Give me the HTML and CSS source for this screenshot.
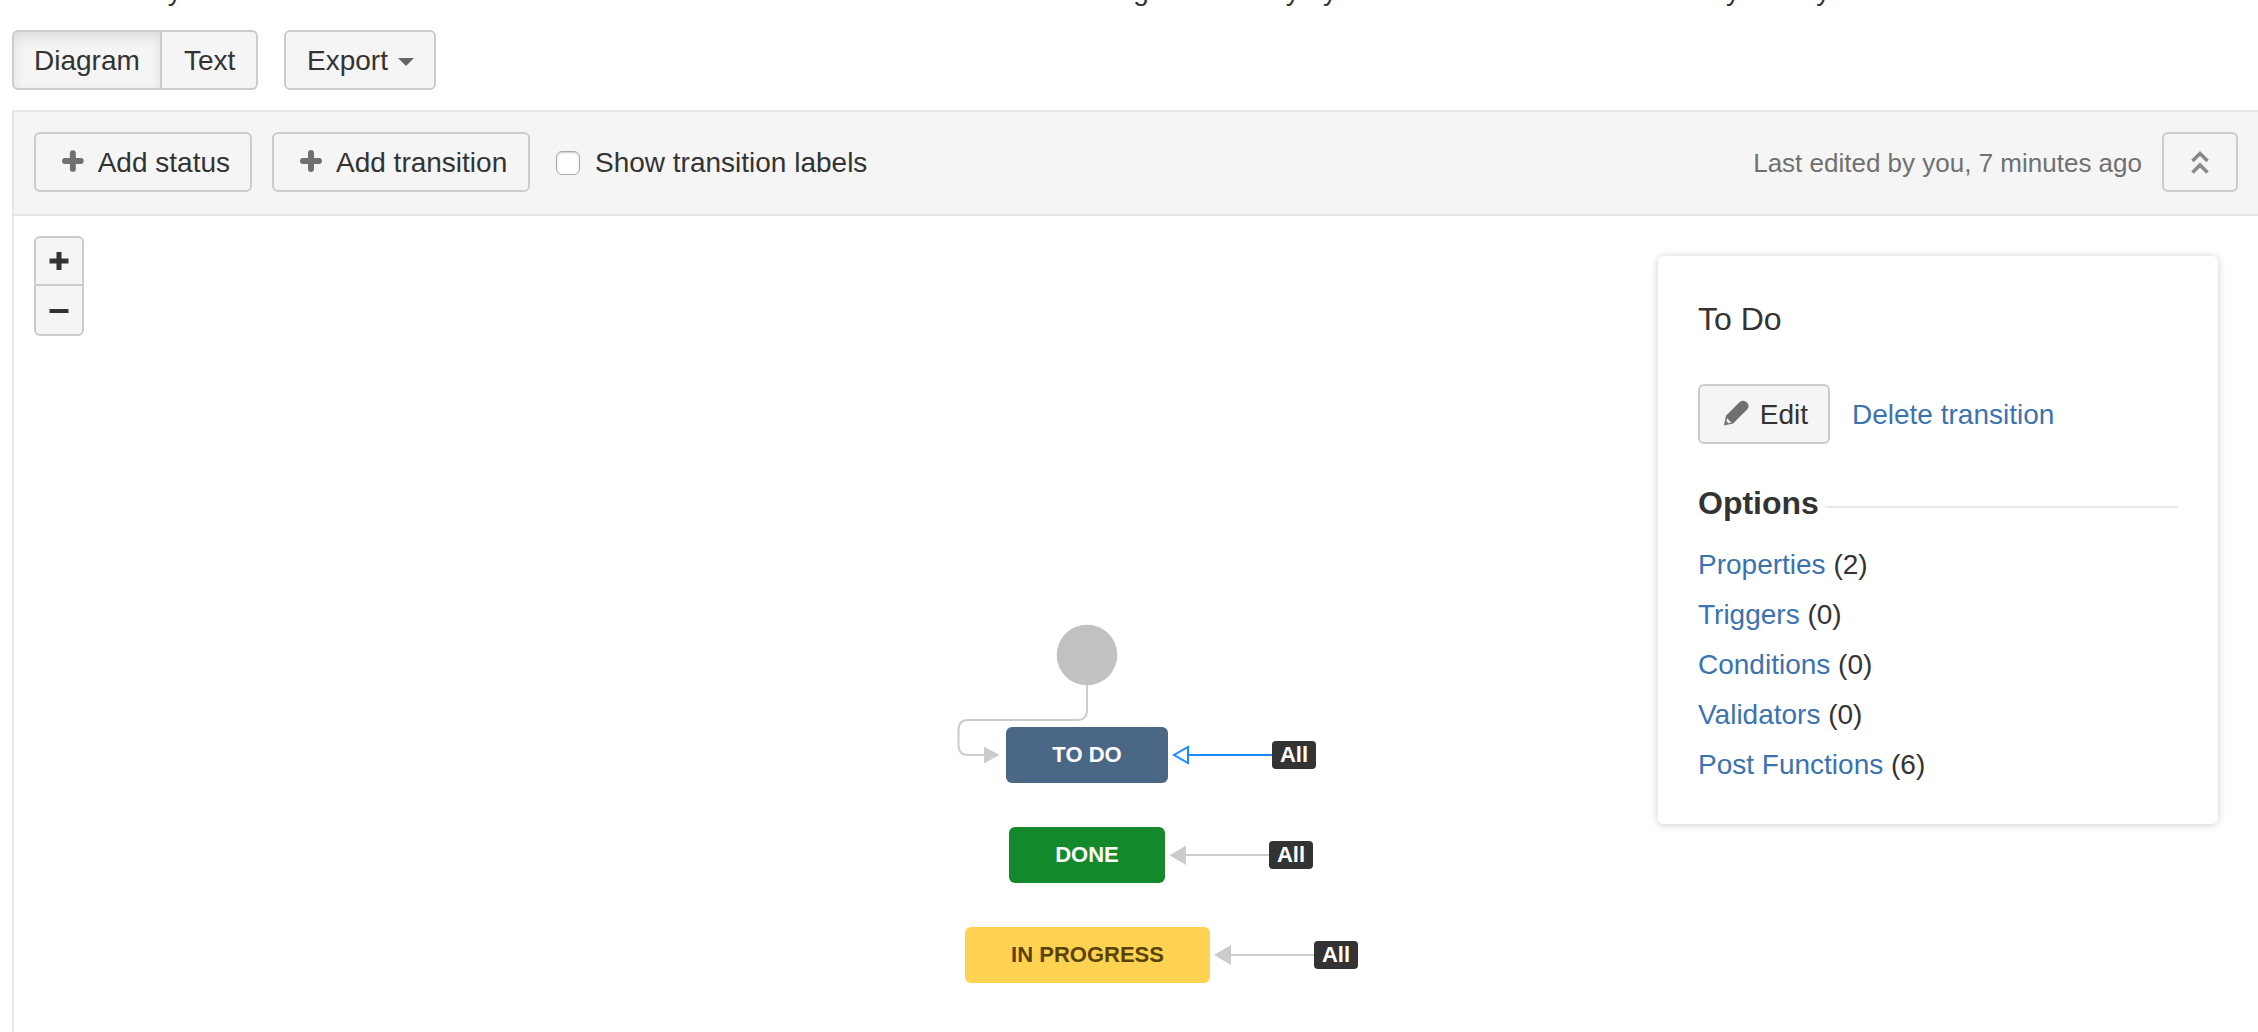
FILE: index.html
```html
<!DOCTYPE html>
<html lang="en">
<head>
<meta charset="utf-8">
<title>Workflow</title>
<link rel="stylesheet" href="styles.css">
</head>
<body>
<p class="description">Generated by JIRA Software version 7.3.0-PLAN-20170818110000. This workflow is managed internally by JIRA Software. Do not manually modify this workflow.</p>
<nav class="modes">
  <div class="group">
    <button class="btn mode active">Diagram</button>
    <button class="btn mode text-mode">Text</button>
  </div>
  <button class="btn export">Export <svg class="caret" viewBox="0 0 16 8"><path d="M0 0h16l-8 8z"/></svg></button>
</nav>
<main class="designer">
  <header class="toolbar">
    <button class="btn add-status"><svg class="plus" viewBox="0 0 22 22"><path d="M11 3v16M3 11h16"/></svg><span>Add status</span></button>
    <button class="btn add-transition"><svg class="plus" viewBox="0 0 22 22"><path d="M11 3v16M3 11h16"/></svg><span>Add transition</span></button>
    <label class="labels"><span class="checkbox"></span>Show transition labels</label>
    <span class="edited">Last edited by you, 7 minutes ago</span>
    <button class="btn collapse" aria-label="Collapse"><svg viewBox="0 0 20 24"><path d="M2.500 11l7.500-7.500 7.500 7.500M2.500 22.500l7.500-7.500 7.500 7.500"/></svg></button>
  </header>
  <section class="canvas">
    <div class="zoom">
      <button class="zoom-btn" aria-label="Zoom in"><svg viewBox="0 0 20 20"><path d="M10 1v18M.5 10h19"/></svg></button>
      <button class="zoom-btn" aria-label="Zoom out"><svg viewBox="0 0 20 20"><path class="minus" d="M.5 10h19"/></svg></button>
    </div>
    <svg class="edges" viewBox="940 600 440 400">
      <circle cx="1087" cy="655" r="30.3" fill="#c1c1c1"/>
      <g fill="none" stroke="#ccc" stroke-width="2">
        <path d="M1087 685v25q0 10-10 10H968.500q-10 0-10 10v15q0 10 10 10H985"/>
        <path d="M1185 855h85M1230 955h85"/>
      </g>
      <path d="M984 746.500v17l15.500-8.500zM1186 845.500v19.500l-16.500-9.800zM1231 945v20l-17-10z" fill="#ccc"/>
      <path d="M1188 755h85M1188 747v16l-14-8z" fill="#fff" stroke="#1a8cff" stroke-width="2"/>
    </svg>
    <div class="status todo">TO DO</div><div class="all all-todo">All</div>
    <div class="status done">DONE</div><div class="all all-done">All</div>
    <div class="status progress">IN PROGRESS</div><div class="all all-progress">All</div>
    <aside class="panel">
      <h2>To Do</h2>
      <div class="actions">
        <button class="btn edit"><svg class="pencil" viewBox="0 0 26 26"><path d="M2 16L16.500 1.500Q20.500-1.500 24 2Q27.500 5.500 24.500 9L9.500 24L0 26z"/><path class="tip" d="M3.200 18.500l4.500 4.500-3 .8-2.200-2.200z"/></svg><span>Edit</span></button>
        <a class="delete">Delete transition</a>
      </div>
      <h3>Options</h3>
      <ul>
        <li><a>Properties</a> (2)</li>
        <li><a>Triggers</a> (0)</li>
        <li><a>Conditions</a> (0)</li>
        <li><a>Validators</a> (0)</li>
        <li><a>Post Functions</a> (6)</li>
      </ul>
    </aside>
  </section>
</main>
</body>
</html>
```

FILE: styles.css
```css
* { box-sizing: border-box; }
body { margin: 0; height: 1032px; overflow: hidden; display: flex; flex-direction: column; background: #fff; color: #333; font: 28px/40px "Liberation Sans", Arial, sans-serif; }
button { font: inherit; color: inherit; }
.description { margin: -29px 0 0 12px; height: 40px; white-space: nowrap; flex: none; }
.modes { display: flex; gap: 26px; margin: 19px 0 20px 12px; flex: none; }
.group { display: flex; }
.btn { height: 60px; border: 2px solid #ccc; border-radius: 6px; background: #f5f5f5; display: flex; align-items: center; padding: 1px 20px 0; white-space: nowrap; flex: none; }
.mode.active { width: 150px; border-radius: 6px 0 0 6px; box-shadow: inset 0 6px 12px #ddd; }
.text-mode { width: 98px; margin-left: -2px; padding-left: 22px; border-radius: 0 6px 6px 0; }
.export { width: 152px; padding-left: 21px; }
.caret { width: 16px; height: 8px; margin-left: 10px; margin-top: 3px; fill: #666; }
.designer { flex: 1; display: flex; flex-direction: column; margin-left: 12px; border-left: 2px solid #e6e6e6; border-top: 2px solid #e6e6e6; }
.toolbar { height: 104px; flex: none; display: flex; align-items: center; padding: 0 20px 2px; background: #f5f5f5; border-bottom: 2px solid #e6e6e6; }
.add-status { width: 218px; padding-left: 25px; }
.add-transition { width: 258px; margin-left: 20px; padding-left: 25px; }
.plus { width: 22px; height: 22px; margin: -3px 14px 0 1px; fill: none; stroke: #707070; stroke-width: 6; stroke-linecap: round; }
.labels { display: flex; align-items: center; margin-left: 26px; padding-top: 2px; }
.checkbox { width: 24px; height: 24px; margin-right: 15px; background: #fff; border: 1px solid #aaa; border-radius: 6px; box-shadow: inset 0 1px 2px #ccc; }
.edited { margin-left: auto; padding-top: 2px; color: #707070; font-size: 26px; }
.collapse { width: 76px; margin-left: 20px; justify-content: center; padding: 0; }
.collapse svg { width: 20px; height: 24px; fill: none; stroke: #888; stroke-width: 3.500; }
.canvas { flex: 1; position: relative; }
.zoom { width: 50px; margin: 20px 0 0 20px; border: 2px solid #ccc; border-radius: 6px; background: #f5f5f5; }
.zoom-btn { display: flex; width: 100%; height: 46px; padding: 0; border: 0; background: none; align-items: center; justify-content: center; }
.zoom-btn + .zoom-btn { height: 50px; padding-top: 2px; border-top: 2px solid #ccc; }
.zoom-btn svg { width: 20px; height: 20px; stroke: #333; stroke-width: 5; }
.zoom-btn .minus { stroke-width: 4; }
.edges { position: absolute; left: 926px; top: 384px; width: 440px; height: 400px; }
.status { position: absolute; height: 56px; border-radius: 6px; display: flex; align-items: center; justify-content: center; color: #fff; font-size: 22px; font-weight: bold; }
.todo { left: 992px; top: 511px; width: 162px; background: #4a6785; }
.done { left: 995px; top: 611px; width: 156px; background: #14892c; }
.progress { left: 951px; top: 711px; width: 245px; background: #ffd351; color: #594300; }
.all { position: absolute; width: 44px; height: 28px; border-radius: 4px; background: #333; color: #fff; font-size: 22px; line-height: 28px; font-weight: bold; text-align: center; }
.all-todo { left: 1258px; top: 525px; }
.all-done { left: 1255px; top: 625px; }
.all-progress { left: 1300px; top: 725px; }
.panel { position: absolute; right: 40px; top: 40px; width: 560px; height: 568px; padding: 40px; border-radius: 6px; background: #fff; box-shadow: 0 1px 8px rgba(0,0,0,.2); }
h2 { margin: 3px 0 45px; font-size: 32px; font-weight: normal; line-height: 40px; }
a { color: #3b73af; }
.actions { display: flex; align-items: center; gap: 22px; }
.delete { padding-top: 2px; }
.edit { width: 132px; padding-left: 24px; }
.pencil { width: 26px; height: 26px; margin: -3px 11px 0 0; fill: #707070; }
.tip { fill: #f5f5f5; }
h3 { display: flex; align-items: center; gap: 6px; margin: 39px 0 0; font-size: 32px; line-height: 40px; }
h3::after { content: ""; flex: 1; height: 2px; margin-top: 8px; background: #e9e9e9; }
ul { list-style: none; margin: 17px 0 0; padding: 0; line-height: 50px; }
```
